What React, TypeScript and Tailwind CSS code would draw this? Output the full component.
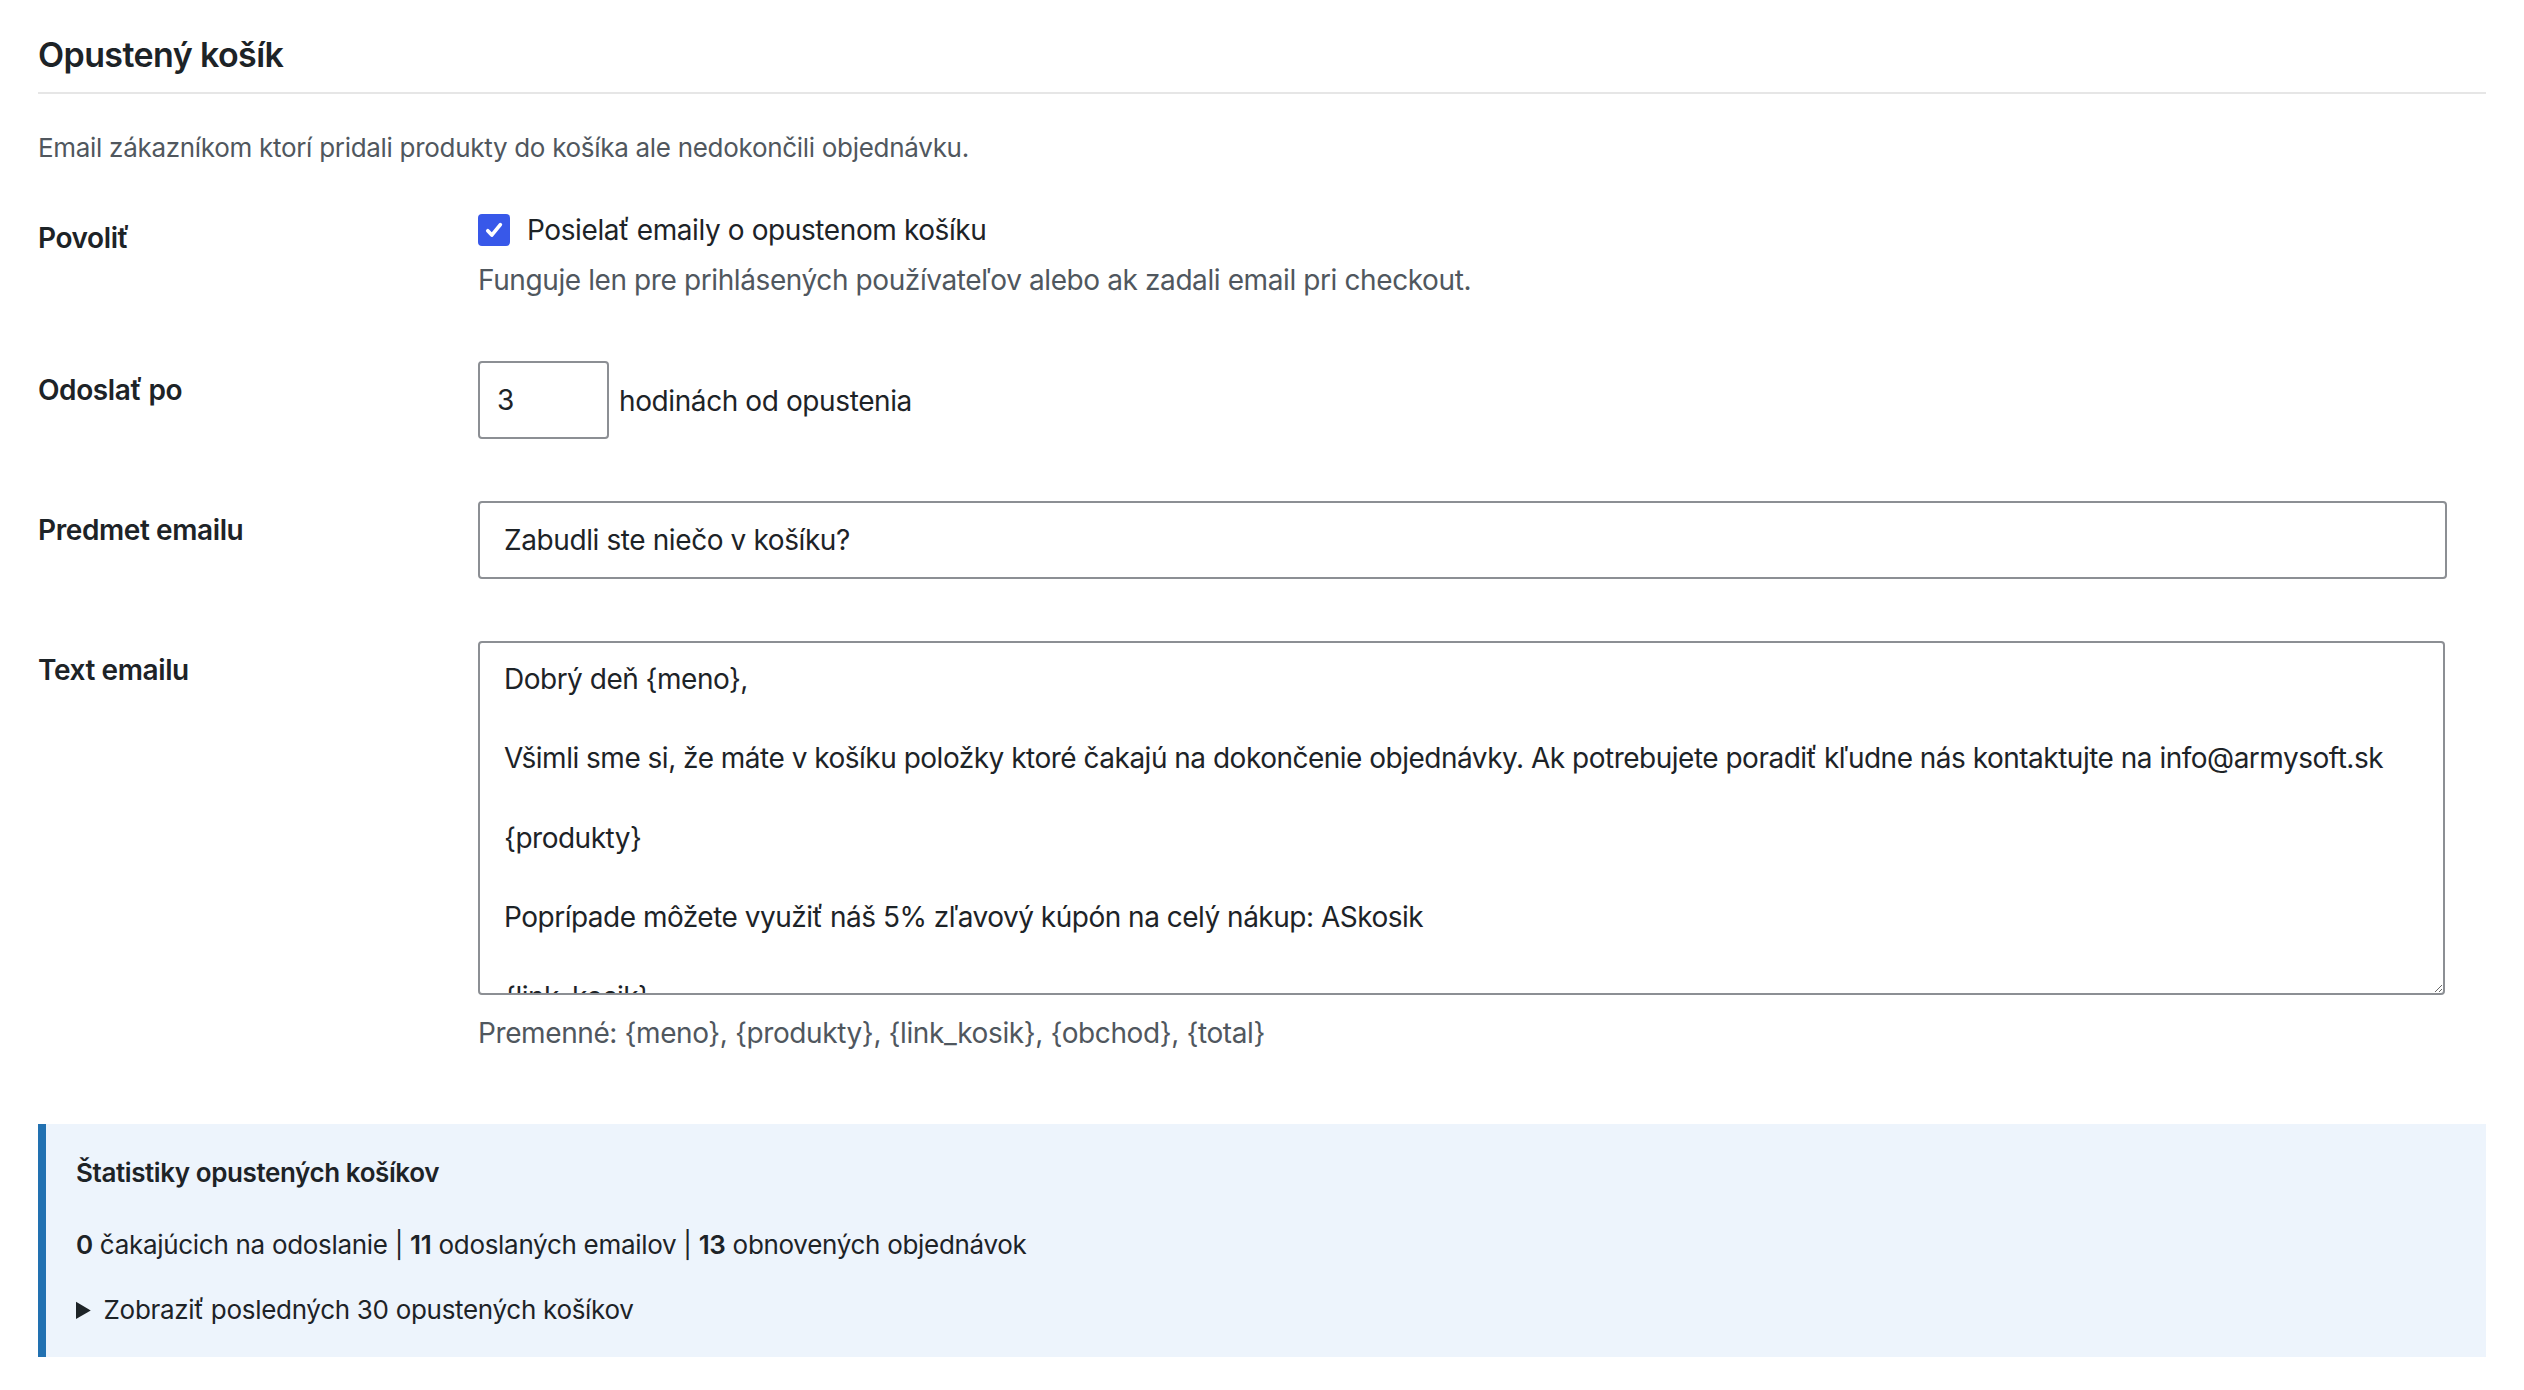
import { useState } from 'react'

const emailBody = `Dobrý deň {meno},

Všimli sme si, že máte v košíku položky ktoré čakajú na dokončenie objednávky. Ak potrebujete poradiť kľudne nás kontaktujte na info@armysoft.sk

{produkty}

Poprípade môžete využiť náš 5% zľavový kúpón na celý nákup: ASkosik

{link_kosik}

S pozdravom,
{obchod}`

function Checkbox({ checked, onChange }: { checked: boolean; onChange: () => void }) {
  return (
    <button
      type="button"
      onClick={onChange}
      className={`flex h-[32px] w-[32px] shrink-0 items-center justify-center rounded-[4px] ${
        checked ? 'bg-[#3858e9]' : 'border-2 border-[#8c8f94] bg-white'
      }`}
    >
      {checked && (
        <svg viewBox="0 0 20 20" className="h-[26px] w-[26px]" fill="none">
          <path d="M5.2 10.6l3.1 3.3 6.6-8" stroke="white" strokeWidth="2.8" strokeLinecap="round" strokeLinejoin="round" />
        </svg>
      )}
    </button>
  )
}

function Label({ children, pad }: { children: string; pad: string }) {
  return (
    <div className={`w-[440px] shrink-0 text-[28px] font-semibold leading-[40px] text-[#1d2327] ${pad}`}>{children}</div>
  )
}

export default function App() {
  const [enabled, setEnabled] = useState(true)

  return (
    <div className="min-h-screen bg-white px-[38px] font-['Inter',sans-serif] tracking-[-0.4px] text-[#1d2327]">
      <h2 className="pt-[35px] text-[34px] font-semibold leading-[40px] tracking-[-0.6px]">Opustený košík</h2>
      <div className="mt-[17px] h-[2px] bg-[#e6e6e6]" />
      <p className="mt-[34px] text-[26px] leading-[40px] tracking-[-0.3px] text-[#50575e]">
        Email zákazníkom ktorí pridali produkty do košíka ale nedokončili objednávku.
      </p>

      {/* Povoliť */}
      <div className="mt-[46px] flex">
        <Label pad="pt-[4px]">Povoliť</Label>
        <div>
          <label className="flex items-center gap-[17px]">
            <Checkbox checked={enabled} onChange={() => setEnabled(!enabled)} />
            <span className="text-[28px] leading-[32px]">Posielať emaily o opustenom košíku</span>
          </label>
          <p className="mt-[14px] text-[28px] leading-[40px] text-[#50575e]">
            Funguje len pre prihlásených používateľov alebo ak zadali email pri checkout.
          </p>
        </div>
      </div>

      {/* Odoslať po */}
      <div className="mt-[61px] flex">
        <Label pad="pt-[9px]">Odoslať po</Label>
        <div className="flex items-center gap-[10px]">
          <input
            defaultValue="3"
            className="h-[78px] w-[131px] rounded-[4px] border-2 border-[#8c8f94] bg-white px-[17px] text-[28px] text-[#1d2327] outline-none"
          />
          <span className="pt-[2px] text-[28px]">hodinách od opustenia</span>
        </div>
      </div>

      {/* Predmet emailu */}
      <div className="mt-[62px] flex">
        <Label pad="pt-[9px]">Predmet emailu</Label>
        <input
          defaultValue="Zabudli ste niečo v košíku?"
          className="h-[78px] w-[1969px] rounded-[4px] border-2 border-[#8c8f94] bg-white px-[24px] text-[28px] text-[#1d2327] outline-none"
        />
      </div>

      {/* Text emailu */}
      <div className="mt-[62px] flex">
        <Label pad="pt-[9px]">Text emailu</Label>
        <div>
          <textarea
            defaultValue={emailBody}
            className="block h-[354px] w-[1967px] resize overflow-hidden rounded-[4px] border-2 border-[#8c8f94] bg-white pl-[24px] pr-[8px] pt-[17px] text-[28px] leading-[39.7px] tracking-[-0.5px] text-[#1d2327] outline-none"
          />
          <p className="mt-[18px] text-[28px] leading-[40px] text-[#50575e]">
            Premenné: {'{meno}'}, {'{produkty}'}, {'{link_kosik}'}, {'{obchod}'}, {'{total}'}
          </p>
        </div>
      </div>

      {/* Štatistiky */}
      <div className="mt-[71px] border-l-[8px] border-[#2271b1] bg-[#edf4fc] pb-[27px] pl-[30px] pt-[29px]">
        <h3 className="text-[26px] font-semibold leading-[40px] tracking-[-0.4px] text-[#1d2327]">Štatistiky opustených košíkov</h3>
        <p className="mt-[32px] text-[26px] leading-[40px] tracking-[-0.3px] text-[#1d2327]">
          <strong className="font-semibold">0</strong> čakajúcich na odoslanie | <strong className="font-semibold">11</strong>{' '}
          odoslaných emailov | <strong className="font-semibold">13</strong> obnovených objednávok
        </p>
        <details className="mt-[25px]">
          <summary className="cursor-pointer text-[26px] leading-[40px] tracking-[-0.3px] text-[#1d2327]">
            Zobraziť posledných 30 opustených košíkov
          </summary>
        </details>
      </div>
    </div>
  )
}
